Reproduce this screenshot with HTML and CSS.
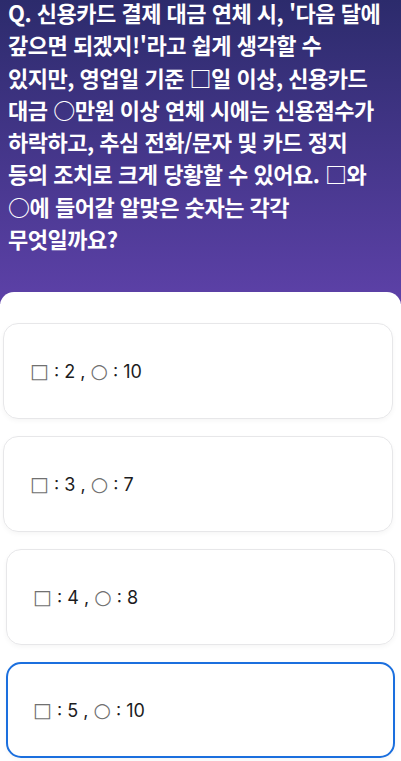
FILE: index.html
```html
<!DOCTYPE html>
<html lang="ko">
<head>
  <meta charset="UTF-8" />
  <meta name="viewport" content="width=device-width, initial-scale=1" />
  <title>퀴즈</title>
  <link rel="stylesheet" href="styles.css">
</head>
<body>

<div class="hero">
  <p class="question">Q. 신용카드 결제 대금 연체 시, '다음 달에 갚으면 되겠지!'라고 쉽게 생각할 수 있지만, 영업일 기준 <span class="keep">□일</span> 이상, 신용카드 대금 <span class="keep">○만원</span> 이상 연체 시에는 신용점수가 하락하고, 추심 전화/문자 및 카드 정지 등의 조치로 크게 당황할 수 있어요. <span class="keep">□와</span> <span class="keep">○에</span> 들어갈 알맞은 숫자는 각각 무엇일까요?</p>
</div>

<div class="sheet">
  <div class="option"><span class="shape">□</span> : 2 , <span class="shape">○</span> : 10</div>
  <div class="option"><span class="shape">□</span> : 3 , <span class="shape">○</span> : 7</div>
  <div class="option shift"><span class="shape">□</span> : 4 , <span class="shape">○</span> : 8</div>
  <div class="option shift selected"><span class="shape">□</span> : 5 , <span class="shape">○</span> : 10</div>
</div>

</body>
</html>
```

FILE: styles.css
```css
:root {
  --top: #2c2b6c; --bottom: #5d41a8;
  --text: #1c1c1e; --line: #e7e7e9; --pick: #1b6fde;
}
body {
  margin: 0; background: #fff;
  font-family: "Noto Sans CJK KR", "Noto Sans", sans-serif;
}
.hero {
  background: linear-gradient(180deg, var(--top), var(--bottom));
  padding: 0 14px 0 8px;
  height: 304px; box-sizing: border-box;
  margin-bottom: -12px;
}
.question {
  margin: 0; position: relative; top: -4px;
  color: #fff; font-weight: 700; font-size: 22px;
  line-height: 32.3px; letter-spacing: -0.5px;
  word-break: keep-all;
}
.keep { white-space: nowrap; }
.sheet {
  background: #fff; border-radius: 14px 14px 0 0;
  padding: 31px 0 8px;
  display: flex; flex-direction: column; gap: 17px;
}
.option {
  box-sizing: border-box; height: 96px;
  margin: 0 8px 0 3px;
  display: flex; align-items: center; padding-left: 26px;
  border: 1px solid var(--line); border-radius: 15px;
  box-shadow: 0 2px 5px #0000000a;
  font-family: Inter, "Noto Sans", sans-serif;
  font-size: 18px; color: var(--text); white-space: pre;
}
.option.shift { margin: 0 6px 0 6px; }
.option.selected { border: 2px solid var(--pick); padding-left: 25px; }
.shape { color: #707070; font-family: "DejaVu Sans", sans-serif; font-size: 20px; }
```
